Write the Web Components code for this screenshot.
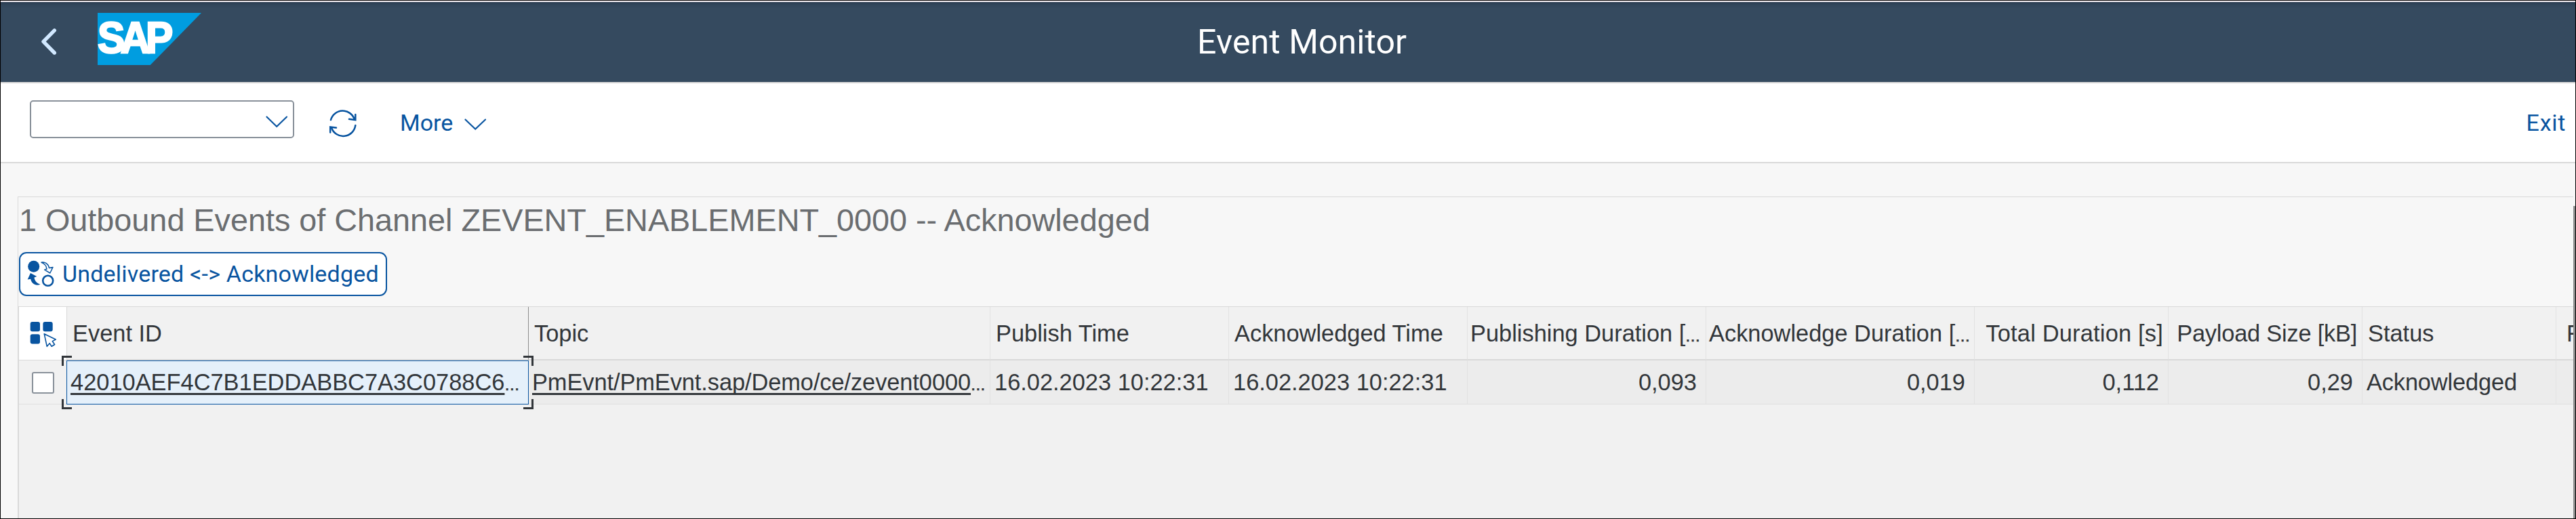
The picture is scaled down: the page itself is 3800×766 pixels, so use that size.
<!DOCTYPE html>
<html lang="en">
<head>
<meta charset="utf-8">
<title>Event Monitor</title>
<style>
  html, body { margin: 0; height: 100%; }
  body { background: #f7f7f7; overflow: hidden; font-family: "Liberation Sans", Arial, sans-serif; color: #32363a; }
</style>
</head>
<body>
<event-app></event-app>
<script>
const define = (name, html, setup) => {
  const tpl = document.createElement('template');
  tpl.innerHTML = html;
  customElements.define(name, class extends HTMLElement {
    connectedCallback() {
      if (this.shadowRoot) return;
      this.attachShadow({ mode: 'open' }).append(tpl.content.cloneNode(true));
      if (setup) setup(this);
    }
  });
};

define('shell-header', `
<style>
  :host { display: flex; align-items: stretch; box-sizing: border-box; height: 120px; background: #354a5f; border-bottom: 2px solid #d9d9d9;
    box-shadow: inset 0 6px 6px -4px rgba(20,30,45,.35); color: #fff; }
  .lead { width: 1765px; display: flex; align-items: flex-start; }
  svg { display: block; flex: none; }
  .back { margin: 38px 0 0 58px; }
  .logo { margin: 16px 0 0 57px; }
  .title { font: 50px/118px Roboto, sans-serif; letter-spacing: .1px; white-space: nowrap; }
</style>
<div class="lead">
  <svg class="back" width="28" height="42" viewBox="0 0 28 42"><path d="M21.3 3.8 5 20.3 21.3 37" fill="none" stroke="#d1e8ff" stroke-width="5.4" stroke-linecap="round" stroke-linejoin="round"/></svg>
  <svg class="logo" width="154" height="77" viewBox="0 0 154 77"><path d="M0 0H153L77.700 77H0z" fill="#009de0"/>
    <text transform="translate(0 59.300) scale(.93 1)" font-family="Liberation Sans, Arial, sans-serif" font-weight="700" font-size="65" letter-spacing="-7" fill="#fff" stroke="#fff" stroke-width="2.600">SAP</text></svg>
</div>
<div class="title"><slot></slot></div>`);

define('combo-box', `
<style>
  :host { display: flex; box-sizing: border-box; width: 390px; height: 56px; border: 2px solid #89919a; border-radius: 5px; background: #fff;
    justify-content: flex-end; align-items: flex-start; }
  svg { margin: 20px 7px 0 0; }
</style>
<svg width="34" height="20" viewBox="0 0 34 20"><path d="M2.500 2.500 17.200 16.700 32 2.500" fill="none" stroke="#0854a0" stroke-width="2.200" stroke-linecap="round"/></svg>`);

define('tool-bar', `
<style>
  :host { display: flex; box-sizing: border-box; height: 118px; background: #fff; border-bottom: 2px solid #d9d9d9;
    font: 34px/116px Roboto, sans-serif; color: #0854a0; }
  combo-box { margin: 25px 0 0 43px; }
  svg { display: block; flex: none; }
  .refresh { margin: 37px 0 0 50px; }
  .more { margin-left: 62px; }
  .chev { margin: 50px 0 0 16px; }
  .exit { margin: 0 14px 0 auto; letter-spacing: .7px; }
</style>
<combo-box></combo-box>
<svg class="refresh" width="44" height="44" viewBox="0 0 44 44" fill="none" stroke="#0854a0" stroke-width="2.500" stroke-linecap="round">
  <path d="M4 17A18.200 18.200 0 0 1 38.800 16"/><path d="M40.300 9V17L31 15.800"/>
  <path d="M40.300 25A18.200 18.200 0 0 1 5 28.500"/><path d="M3.200 35.500V27.500L12 28.500"/></svg>
<span class="more">More</span>
<svg class="chev" width="34" height="20" viewBox="0 0 34 20"><path d="M2.500 3.500 17.200 17.500 32 3.500" fill="none" stroke="#0854a0" stroke-width="2.200" stroke-linecap="round"/></svg>
<span class="exit">Exit</span>`);

define('toggle-button', `
<style>
  :host { display: flex; box-sizing: border-box; width: 543px; height: 65px; border: 2px solid #0854a0; border-radius: 11px; background: #fff;
    font: 34px/61px Roboto, sans-serif; color: #0854a0; letter-spacing: .2px; white-space: nowrap; }
  svg { flex: none; margin: 9px 12px 0 10px; }
</style>
<svg width="40" height="42" viewBox="0 0 40 42">
  <circle cx="9.700" cy="10.300" r="8.500" fill="#0854a0"/>
  <circle cx="30.700" cy="31.300" r="7.500" fill="none" stroke="#0854a0" stroke-width="2.600"/>
  <path d="M21 4.200C26 3.200 31.500 6 32.500 12.500L38 11.500 33.800 20 25.700 15.200 29 14C28.500 9.500 26 6 21 4.200z" fill="none" stroke="#0854a0" stroke-width="1.500" stroke-linejoin="round"/>
  <path d="M.7 29.500 5 20 14.300 25 10.500 26.500C11 31 14 35 19.500 36.700 13 39.500 6.500 36 5.200 28.800z" fill="#0854a0"/>
</svg><slot></slot>`);

// One grid cell; [head] for column titles, [end] for right-aligned figures
define('grid-cell', `
<style>
  :host { display: block; box-sizing: border-box; flex: none; height: 65px; line-height: 64px; padding-left: 5px; background: #ececec;
    border-right: 1px solid #e2e2e2; border-bottom: 1px solid #e0e0e0; white-space: nowrap; overflow: hidden; }
  :host([end]) { text-align: right; padding: 0 13px 0 0; }
  :host([head]) { height: 79px; line-height: 78px; background: #f1f1f1; padding-left: 8px; border-bottom: 2px solid #d9d9d9; }
  :host([head][end]) { padding: 0 7px 0 0; }
  :host([cut]) { text-align: left !important; padding: 0 0 0 4px !important; }
  :host([dark]) { border-right-color: #8c8c8c; }
  :host([wide]) { padding-left: 6px; }
  :host([link]) .t { text-decoration: underline 3px; text-underline-offset: 4px; text-decoration-skip-ink: none; }
  .d { font-size: 26px; display: none; -webkit-text-stroke: .5px; }
  :host([cut]) .d, :host([link]) .d { display: inline; }
  :host([focused]) { position: relative; overflow: visible; background: #e5f0fa; border-color: #0854a0; box-shadow: inset 0 1px #0854a0, -1px 0 #0854a0; }
  i { display: none; }
  :host([focused]) i { display: block; position: absolute; width: 12px; height: 12px; border: 0 solid #32363a; }
  .a { left: -8px; top: -7px; border-width: 3px 0 0 3px !important; }
  .b { right: -8px; top: -7px; border-width: 3px 3px 0 0 !important; }
  .c { left: -8px; bottom: -8px; border-width: 0 0 3px 3px !important; }
  .e { right: -8px; bottom: -8px; border-width: 0 3px 3px 0 !important; }
</style>
<span class="t"><slot></slot></span><span class="d">...</span><i class="a"></i><i class="b"></i><i class="c"></i><i class="e"></i>`,
  el => { el.style.width = el.getAttribute('w') + 'px'; });

define('select-all', `
<style>
  :host { display: block; box-sizing: border-box; flex: none; width: 71px; height: 79px; background: #fff; border-right: 1px solid #d9d9d9; border-bottom: 1px solid #d9d9d9; }
  svg { display: block; margin: 20px 0 0 14px; }
</style>
<svg width="46" height="42" viewBox="0 0 46 42"><g fill="#0854a0"><rect x="2.700" y="2" width="14.300" height="14.300" rx="3"/><rect x="21.400" y="2" width="14.300" height="14.300" rx="3"/><rect x="2.700" y="20.300" width="14.300" height="14.300" rx="3"/></g>
<path d="M23.200 19.700 40.200 28 35.300 30.600 38.600 35.500 34.200 38.200 31.200 33.700 27.300 38.300z" fill="#fff" stroke="#0854a0" stroke-width="1.600" stroke-linejoin="round"/></svg>`);

define('row-check', `
<style>
  :host { display: block; box-sizing: border-box; flex: none; width: 71px; height: 65px; background: #f1f1f1; border-bottom: 1px solid #e0e0e0; }
  span { display: block; box-sizing: border-box; width: 33px; height: 32px; margin: 17px 0 0 19px; background: #fff; border: 2px solid #89919a; border-radius: 3px; }
</style><span></span>`);

define('event-grid', `
<style>
  :host { display: flex; flex-direction: column; flex: 1; background: #f1f1f1; border-top: 1px solid #d9d9d9; border-left: 1px solid #d9d9d9; font-size: 34.4px; overflow: hidden; }
  div { display: flex; }
  .date { padding-left: 6px; }
  .topic { letter-spacing: -.08px; }
  .total { letter-spacing: .2px; }
  .size { letter-spacing: -.22px; }
  .ack { letter-spacing: -.15px; }
  .last { padding-left: 15px; }
</style>
<div>
  <select-all></select-all>
  <grid-cell head dark w="681">Event ID</grid-cell><grid-cell head w="681">Topic</grid-cell>
  <grid-cell head w="352">Publish Time</grid-cell><grid-cell head w="352">Acknowledged Time</grid-cell>
  <grid-cell head cut w="352">Publishing Duration [</grid-cell><grid-cell head cut w="396">Acknowledge Duration [</grid-cell>
  <grid-cell class="total" head end w="286">Total Duration [s]</grid-cell><grid-cell class="size" head end w="286">Payload Size [kB]</grid-cell>
  <grid-cell head w="286">Status</grid-cell><grid-cell class="last" head w="60">F</grid-cell>
</div>
<div>
  <row-check></row-check>
  <grid-cell link focused w="681">42010AEF4C7B1EDDABBC7A3C0788C6</grid-cell><grid-cell class="topic" link w="681">PmEvnt/PmEvnt.sap/Demo/ce/zevent0000</grid-cell>
  <grid-cell class="date" w="352">16.02.2023 10:22:31</grid-cell><grid-cell class="date" w="352">16.02.2023 10:22:31</grid-cell>
  <grid-cell end w="352">0,093</grid-cell><grid-cell end w="396">0,019</grid-cell>
  <grid-cell end w="286">0,112</grid-cell><grid-cell end w="286">0,29</grid-cell>
  <grid-cell class="ack" wide w="286">Acknowledged</grid-cell><grid-cell w="60"></grid-cell>
</div>`);

define('event-panel', `
<style>
  :host { display: flex; flex: 1; padding: 49px 0 0 25px; }
  .box { flex: 1; min-width: 0; display: flex; flex-direction: column; border: solid #d9d9d9; border-width: 1px 0 0 1px; }
  h1 { margin: 0 0 0 1px; font-weight: 400; font-size: 46.8px; line-height: 68px; letter-spacing: -.02px; color: #6a6d70; white-space: nowrap; }
  toggle-button { margin: 13px 0 15px 1px; }
  .scroll { flex: none; width: 3px; margin-top: 14px; background: #8c8c8c; }
</style>
<div class="box">
  <h1>1 Outbound Events of Channel ZEVENT_ENABLEMENT_0000 -- Acknowledged</h1>
  <toggle-button>Undelivered &lt;-&gt; Acknowledged</toggle-button>
  <event-grid></event-grid>
</div>
<div class="scroll"></div>`);

define('event-app', `
<style>
  :host { display: flex; flex-direction: column; box-sizing: border-box; width: 3800px; height: 766px; border: 1px solid #000; background: #f7f7f7; }
  .strip { height: 2px; background: #f5eff3; }
</style>
<div class="strip"></div>
<shell-header>Event Monitor</shell-header>
<tool-bar></tool-bar>
<event-panel></event-panel>`);
</script>
</body>
</html>
